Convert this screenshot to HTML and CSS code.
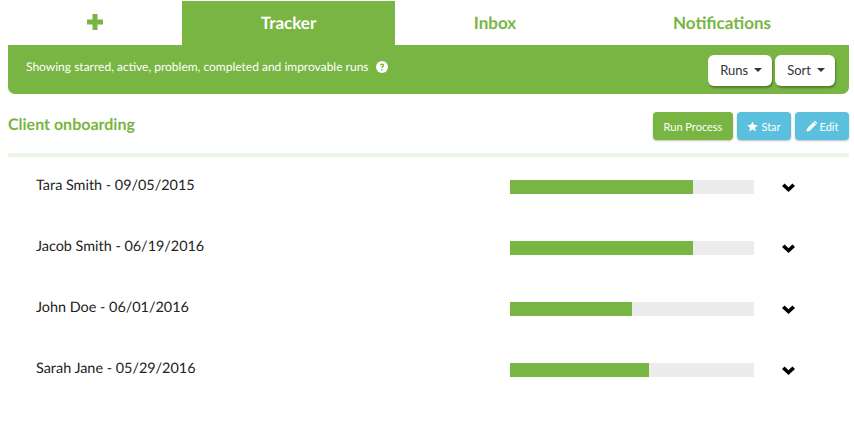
FILE: index.html
```html
<!DOCTYPE html>
<html lang="en">
<head>
<meta charset="utf-8">
<title>Tracker</title>
<link rel="stylesheet" href="styles.css">
</head>
<body>
<nav class="tabs">
  <a class="tab tab-plus"><svg class="plus" width="16" height="16" viewBox="0 0 16 16"><path d="M5.500 0h5v5.500H16v5h-5.500V16h-5v-5.500H0v-5h5.500z"/></svg></a>
  <a class="tab active">Tracker</a>
  <a class="tab">Inbox</a>
  <a class="tab">Notifications</a>
</nav>
<section class="banner">
  <p class="banner-text">Showing starred, active, problem, completed and improvable runs
    <svg class="help" width="12" height="12" viewBox="0 0 12 12"><circle cx="6" cy="6" r="6" fill="#fff"/><path d="M3.900 4.600C4 3.300 4.900 2.600 6.100 2.600c1.300 0 2.100.8 2.100 1.800 0 .9-.5 1.300-1.100 1.700-.4.300-.5.500-.5.900H5.200c0-.9.300-1.300.8-1.700.5-.3.800-.5.800-.9 0-.3-.3-.6-.7-.6-.5 0-.8.300-.8.800zM5.200 7.900h1.400v1.400H5.200z" fill="#78b543"/></svg>
  </p>
  <div class="banner-actions">
    <button class="drop">Runs<span class="caret"></span></button>
    <button class="drop">Sort<span class="caret"></span></button>
  </div>
</section>
<header class="head">
  <h1 class="title">Client onboarding</h1>
  <div class="head-actions">
    <button class="btn btn-green">Run Process</button>
    <button class="btn btn-blue"><svg width="11" height="11" viewBox="0 0 24 24" fill="#fff"><path d="M12 1l3.400 7.300 7.900 1-5.800 5.500 1.500 7.900-7-3.900-7 3.900 1.500-7.900L.7 9.300l7.900-1z"/></svg> Star</button>
    <button class="btn btn-blue"><svg width="11" height="11" viewBox="0 0 24 24" fill="#fff"><path d="M1 23l1.800-7.200L16.500 2.100l5.400 5.400L8.200 21.200zM18 .6c.8-.8 2-.8 2.800 0l2.600 2.600c.8.800.8 2 0 2.800l-.6.600-5.400-5.400z"/></svg> Edit</button>
  </div>
</header>
<ul class="runs">
  <li class="run"><span class="run-name">Tara Smith - 09/05/2015</span><span class="bar"><span class="fill" style="width:75%"></span></span><svg class="chev" width="13" height="9" viewBox="0 0 13 9"><path d="M0 3l2.600-2.600L6.500 4.200 10.400.4 13 3 6.500 9z"/></svg></li>
  <li class="run"><span class="run-name">Jacob Smith - 06/19/2016</span><span class="bar"><span class="fill" style="width:75%"></span></span><svg class="chev" width="13" height="9" viewBox="0 0 13 9"><path d="M0 3l2.600-2.600L6.500 4.200 10.400.4 13 3 6.500 9z"/></svg></li>
  <li class="run"><span class="run-name">John Doe - 06/01/2016</span><span class="bar"><span class="fill" style="width:50%"></span></span><svg class="chev" width="13" height="9" viewBox="0 0 13 9"><path d="M0 3l2.600-2.600L6.500 4.200 10.400.4 13 3 6.500 9z"/></svg></li>
  <li class="run"><span class="run-name">Sarah Jane - 05/29/2016</span><span class="bar"><span class="fill" style="width:57%"></span></span><svg class="chev" width="13" height="9" viewBox="0 0 13 9"><path d="M0 3l2.600-2.600L6.500 4.200 10.400.4 13 3 6.500 9z"/></svg></li>
</ul>
</body>
</html>
```
FILE: styles.css
```css
* { box-sizing: border-box; }
html, body { height: 100%; }
body {
  margin: 0;
  padding: 1px 5px 0 8px;
  background: #fff;
  color: #222;
  font-family: Lato, "Open Sans", sans-serif;
  text-rendering: geometricPrecision;
  overflow: hidden;
}
.tabs {
  display: grid;
  grid-template-columns: 174px 213px 200px 254px;
  height: 44px;
}
.tab {
  display: flex;
  align-items: center;
  justify-content: center;
  padding-bottom: 2px;
  color: #78b543;
  font-size: 17px;
  font-weight: 700;
}
.tab.active { background: #78b543; color: #fff; }
.plus { fill: #78b543; }
.banner {
  height: 49px;
  background: #78b543;
  border-radius: 0 0 7px 7px;
  display: flex;
  align-items: center;
  justify-content: space-between;
  padding: 0 14px 0 18px;
}
.banner-text {
  margin: 0 0 6px;
  color: #fff;
  font-size: 12px;
  display: flex;
  align-items: center;
  gap: 7px;
}
.banner-actions { display: flex; gap: 3px; margin-top: 1px; }
.drop {
  height: 31px;
  padding: 0 10px 0 12px;
  background: #fff;
  border: 0;
  border-radius: 6px;
  box-shadow: 1px 2px 2px rgba(0,0,0,.3);
  color: #333;
  font: 400 13px Lato, sans-serif;
  display: flex;
  align-items: center;
}
.caret {
  margin-left: 6px;
  border-top: 4px solid #333;
  border-left: 4px solid transparent;
  border-right: 4px solid transparent;
}
.head {
  height: 63px;
  display: flex;
  align-items: center;
  justify-content: space-between;
  border-bottom: 4px solid #ebf5e4;
}
.title {
  margin: 2px 0 0;
  color: #78b543;
  font-size: 16px;
  font-weight: 700;
}
.head-actions { display: flex; gap: 4px; margin-top: 5px; }
.btn {
  height: 28px;
  border: 0;
  border-radius: 4px;
  box-shadow: 0 1px 2px rgba(0,0,0,.25);
  color: #fff;
  font: 400 11px Lato, sans-serif;
  display: flex;
  align-items: center;
  justify-content: center;
  gap: 3px;
  padding: 0;
}
.btn-green { background: #78b543; width: 80px; }
.btn-blue { background: #5bc0de; width: 54px; }
.runs { list-style: none; margin: -1px 0 0; padding: 0; }
.run {
  height: 61px;
  display: flex;
  align-items: center;
  padding-left: 28px;
}
.run-name {
  width: 474px;
  color: #222;
  font-size: 14.4px;
  margin-bottom: 2px;
}
.bar {
  width: 244px;
  height: 14px;
  background: #ececec;
  display: block;
}
.fill { display: block; height: 100%; background: #78b543; }
.chev { margin: 1px 0 0 28px; fill: #000; }
```
